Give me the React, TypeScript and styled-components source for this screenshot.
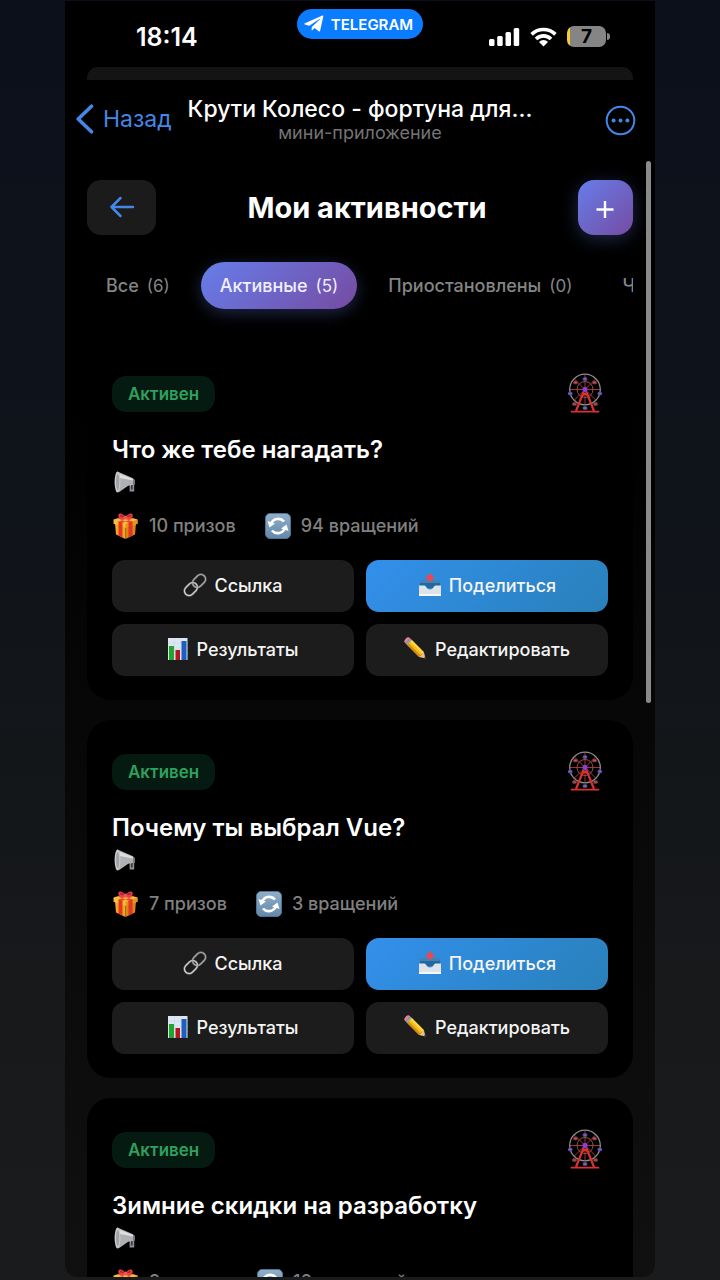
import React from "react";
import styled, { createGlobalStyle, css } from "styled-components";

const GlobalStyle = createGlobalStyle`
  * { box-sizing: border-box; }
  html, body, #root { height: 100%; }
  body {
    margin: 0;
    background: #121418;
    color: #fff;
    font-family: Inter, "Liberation Sans", sans-serif;
  }
  button { font: inherit; color: inherit; border: 0; padding: 0; background: none; cursor: pointer; }
  h1, h2, p { margin: 0; }
  svg { display: block; flex: none; }
`;

const Stage = styled.div`
  height: 100vh;
  padding: 1px 0 3px;
  overflow: hidden;
  background: linear-gradient(180deg, #0b101b 0%, #0e131b 30%, #131619 60%, #191a1c 85%, #1a1b1c 100%);
`;

const Phone = styled.div`
  position: relative;
  display: flex;
  flex-direction: column;
  width: 100%;
  max-width: 590px;
  height: 100%;
  margin: 0 auto;
  overflow: hidden;
  border-radius: 0 0 12px 12px;
  background: linear-gradient(180deg, #000 0%, #000 32%, #070707 56%, #101010 100%);
`;

const StatusBar = styled.header`
  flex: none;
  display: grid;
  grid-template-columns: 1fr auto 1fr;
  height: 66px;
  padding: 8px 0 0;
`;

const Clock = styled.time`
  padding: 13px 0 0 71px;
  font-size: 25px;
  line-height: 30px;
  font-weight: 600;
`;

const AppPill = styled.button`
  display: flex;
  align-items: center;
  gap: 7px;
  height: 30px;
  padding: 0 10px 0 7px;
  border-radius: 15px;
  background: #0a7cff;
  font-size: 15px;
  font-weight: 600;
`;

const Indicators = styled.div`
  display: flex;
  align-items: center;
  justify-content: flex-end;
  gap: 10px;
  height: 55px;
  padding-right: 49px;
`;

const Battery = styled.div`
  position: relative;
  width: 39px;
  height: 21px;
  border-radius: 7px;
  background: linear-gradient(90deg, #f5cf2e 3px, #858585 3px);
  color: #000;
  font-size: 19px;
  line-height: 21px;
  font-weight: 700;
  text-align: center;
  &::after {
    content: "";
    position: absolute;
    top: 7px;
    right: -4px;
    width: 3px;
    height: 7px;
    border-radius: 0 3px 3px 0;
    background: #858585;
  }
`;

const SheetPeek = styled.div`
  flex: none;
  height: 13px;
  margin: 0 22px;
  border-radius: 11px 11px 0 0;
  background: #141414;
`;

const NavBar = styled.nav`
  flex: none;
  display: grid;
  grid-template-columns: 1fr auto 1fr;
  align-items: center;
  height: 80px;
  padding: 0 11px;
`;

const NavBack = styled.button`
  display: flex;
  align-items: center;
  justify-self: start;
  gap: 9px;
  padding-bottom: 2px;
  color: #4487e8;
  font-size: 23px;
`;

const NavTitle = styled.div`
  padding-bottom: 2px;
  text-align: center;
  strong { display: block; font-size: 23px; line-height: 28px; font-weight: 500; white-space: nowrap; }
  span { display: block; color: #747474; font-size: 18px; line-height: 20px; }
`;

const MoreButton = styled.button`
  justify-self: end;
  margin-right: 8px;
`;

const Content = styled.main`
  flex: 1;
  min-height: 0;
  overflow: hidden;
  padding: 20px 22px;
`;

const Toolbar = styled.div`
  display: flex;
  align-items: center;
  justify-content: space-between;
  h1 { font-size: 29px; line-height: 36px; font-weight: 700; }
`;

const ToolButton = styled.button<{ $accent?: boolean }>`
  display: grid;
  place-items: center;
  width: 69px;
  height: 55px;
  border-radius: 14px;
  background: #1b1b1b;
  color: #4487e8;
  ${(p) =>
    p.$accent &&
    css`
      width: 55px;
      border-radius: 16px;
      background: linear-gradient(135deg, #667eea, #764ba2);
      color: #fff;
      box-shadow: 0 4px 18px rgba(102, 126, 234, 0.3);
    `}
`;

const Tabs = styled.div`
  display: flex;
  gap: 12px;
  margin: 7px 0 13px;
  padding: 20px 0;
  overflow: hidden;
`;

const Tab = styled.button<{ $active?: boolean }>`
  flex: none;
  display: flex;
  align-items: center;
  gap: 8px;
  height: 47px;
  padding: 0 19px;
  border-radius: 24px;
  color: ${(p) => (p.$active ? "#f0efff" : "#858585")};
  font-size: 18px;
  font-weight: 500;
  white-space: nowrap;
  ${(p) =>
    p.$active &&
    css`
      background: linear-gradient(135deg, #667eea, #764ba2);
      box-shadow: 0 4px 16px rgba(102, 126, 234, 0.3);
    `}
  span { font-size: 17px; font-weight: 400; }
`;

const CardList = styled.div`
  display: flex;
  flex-direction: column;
  gap: 20px;
`;

const Card = styled.article`
  padding: 25px 25px 24px;
  border-radius: 24px;
  background: #000;
  h2 { margin: 13px 0 4px; font-size: 24px; line-height: 32px; font-weight: 600; }
`;

const CardTop = styled.div`
  display: flex;
  align-items: center;
  justify-content: space-between;
`;

const Badge = styled.span`
  padding: 0 16px;
  border-radius: 14px;
  background: #051a10;
  color: #2fa05f;
  font-size: 17px;
  line-height: 36px;
  font-weight: 600;
`;

const Stats = styled.div`
  display: flex;
  gap: 29px;
  margin: 19px 0 21px;
`;

const Stat = styled.span`
  display: flex;
  align-items: center;
  gap: 10px;
  height: 26px;
  color: #808080;
  font-size: 18px;
  line-height: 24px;
  font-weight: 500;
`;

const Actions = styled.div`
  display: grid;
  grid-template-columns: 1fr 1fr;
  gap: 12px;
`;

const Action = styled.button<{ $primary?: boolean }>`
  display: flex;
  align-items: center;
  justify-content: center;
  gap: 7px;
  height: 52px;
  padding-bottom: 2px;
  border-radius: 13px;
  background: ${(p) => (p.$primary ? "linear-gradient(135deg, #3390ec, #2980b9)" : "#1c1c1c")};
  color: #f4f4f4;
  font-size: 18px;
  font-weight: 500;
`;

const ScrollThumb = styled.div`
  position: absolute;
  top: 160px;
  right: 4px;
  bottom: 45%;
  width: 5px;
  border-radius: 3px;
  background: #8a8a8a;
`;

const PlaneIcon = () => (
  <svg width="20" height="18" viewBox="0 0 20 18" fill="#fff" aria-hidden="true">
    <path d="M19.3 1.4c.2-.7-.3-1-.9-.8L.9 8.2c-.8.3-.7 1 0 1.2l4.4 1.3L15.5 4c.5-.3.8 0 .5.3l-8.2 7.6-.2 3.7c.4 0 .7-.2 1-.5l2-2 4.1 3.2c.8.4 1.3.2 1.5-.8z" />
  </svg>
);

const SignalIcon = () => (
  <svg width="31" height="20" viewBox="0 0 31 20" fill="#fff" aria-hidden="true">
    <rect x="0" y="12" width="5.500" height="7" rx="1.500" />
    <rect x="8.200" y="9" width="5.500" height="10" rx="1.500" />
    <rect x="16.500" y="5" width="5.500" height="14" rx="1.500" />
    <rect x="24.700" y="1" width="5.500" height="18" rx="1.500" />
  </svg>
);

const WifiIcon = () => (
  <svg width="27" height="20" viewBox="0 0 27 20" aria-hidden="true">
    <g fill="none" stroke="#fff" strokeWidth="3.6">
      <path d="M1.6 7.4a17 17 0 0 1 23.8 0" />
      <path d="M6 12a10.6 10.6 0 0 1 15 0" />
    </g>
    <path d="M9 14.9a6.4 6.4 0 0 1 9 0l-4.5 4.5z" fill="#fff" />
  </svg>
);

const ChevronIcon = () => (
  <svg width="18" height="30" viewBox="0 0 18 30" fill="none" stroke="currentColor" strokeWidth="3.600" strokeLinecap="round" strokeLinejoin="round" aria-hidden="true">
    <path d="M15.5 2.200 2.200 15l13.300 12.800" />
  </svg>
);

const MoreIcon = () => (
  <svg width="31" height="31" viewBox="0 0 31 31" aria-hidden="true">
    <circle cx="15.5" cy="15.5" r="13.8" fill="none" stroke="#4487e8" strokeWidth="2" />
    <g fill="#4487e8">
      <circle cx="8.6" cy="15.5" r="2" />
      <circle cx="15.5" cy="15.5" r="2" />
      <circle cx="22.4" cy="15.5" r="2" />
    </g>
  </svg>
);

const ArrowIcon = () => (
  <svg width="26" height="24" viewBox="0 0 26 24" fill="none" stroke="currentColor" strokeWidth="2.500" strokeLinecap="round" strokeLinejoin="round" aria-hidden="true">
    <path d="M24 11H2.500M11.500 2 2.500 11l9 9" />
  </svg>
);

const PlusIcon = () => (
  <svg width="18" height="22" viewBox="0 0 18 22" stroke="currentColor" strokeWidth="2.400" aria-hidden="true">
    <path d="M.5 12.500h17M9 4v17" />
  </svg>
);

const cabins = [
  [20, 5, "#6a45ac"],
  [29.5, 8.5, "#93343f"],
  [34.8, 19.5, "#5c4aa6"],
  [30.5, 30, "#863d39"],
  [20, 34, "#5e5896"],
  [9.5, 30, "#863d39"],
  [5.2, 19.5, "#5c4aa6"],
  [10.5, 8.5, "#93343f"],
] as const;

const WheelIcon = () => (
  <svg width="46" height="54" viewBox="-3 -7 46 54" aria-hidden="true">
    <g stroke="#a5302d" strokeWidth="1">
      <path d="M20 1v29M5 15.500h30M9.400 5l21.200 21M30.600 5 9.400 26" />
    </g>
    <circle cx="20" cy="15.500" r="8" fill="none" stroke="#8b5948" strokeWidth="1" />
    <circle cx="20" cy="15.500" r="15.300" fill="none" stroke="#8f8c8c" strokeWidth="1.300" />
    {cabins.map(([x, y, color]) => (
      <g key={`${x}-${y}`}>
        <rect x={x - 2.3} y={y - 1.7} width="4.600" height="3.400" rx="1.500" fill={color} />
        <rect x={x - 1.2} y={y - 0.5} width="2.400" height="1" fill="#c9b5d8" opacity=".35" />
      </g>
    ))}
    <path d="M18.600 18 11 37M21.400 18 29 37" stroke="#d93234" strokeWidth="2.200" />
    <path d="M16.500 24q3.500-6 7 0l-.8-5h-5.400z" fill="#d93234" />
    <path d="M6.500 37.700h27" stroke="#d93234" strokeWidth="1.800" strokeLinecap="round" />
    <rect x="17.500" y="13" width="5" height="5" rx="2" fill="#8a3fe0" />
  </svg>
);

const MegaphoneIcon = () => (
  <svg width="26" height="24" viewBox="0 0 26 24" aria-hidden="true">
    <path d="M18.500 10.500v10h2.800v-8.300" fill="none" stroke="#8d9095" strokeWidth="1.800" />
    <path d="M5.500 1.500 21 8.300q1.400.8 1.200 3v3.500l-6 1-9.700 6.700z" fill="#aeb0b3" />
    <path d="M7 3.500 21 9v1.500L8 8z" fill="#dedede" />
    <ellipse cx="5.500" cy="12" rx="2.900" ry="10.600" fill="#c9cacc" />
    <ellipse cx="5.700" cy="12" rx="1.600" ry="8" fill="#a0a2a5" />
    <path d="m21 9 2 .8v4.700l-2 .4z" fill="#77797d" />
  </svg>
);

const GiftIcon = () => (
  <svg width="27" height="26" viewBox="0 0 27 26" aria-hidden="true">
    <path d="M3 10.500 13.500 14v12L4 21.500z" fill="#f2a624" />
    <path d="M24 10.500 13.500 14v12l9.500-4.500z" fill="#db8418" />
    <path d="M1.500 6.500 13.500 3l12 3.500v4.300l-12 4-12-4z" fill="#f8bd3a" />
    <path d="m13.500 11 12-4.500v4.300l-12 4z" fill="#e59420" />
    <path d="m6.500 8.300 4 1.300v15l-4-2zM20.500 8.300l-4 1.300v15l4-2z" fill="#e23522" />
    <path d="m6 5.500 3.500-1 11 4-4 1.300zM21 5.500l-3.500-1-11 4 4 1.300z" fill="#e84a39" />
    <path d="M13.500 5.500C10 5.800 7 5.500 6.500 4c-.5-2 0-4 2-3.500 2 .3 4 2 5 3.700 1-1.700 3-3.400 5-3.700 2-.5 2.500 1.500 2 3.500-.5 1.500-3.500 1.800-7 1.500z" fill="#e73b43" />
    <path d="M8 3c1-.8 3 .2 4 1.300M19 3c-1-.8-3 .2-4 1.300" fill="none" stroke="#8f1821" strokeWidth="1" />
    <circle cx="13.500" cy="4.500" r="2" fill="#f0545a" />
  </svg>
);

const SpinIcon = () => (
  <svg width="26" height="26" viewBox="0 0 26 26" aria-hidden="true">
    <defs>
      <linearGradient id="spin" x1="0" y1="0" x2="0" y2="1">
        <stop offset="0" stopColor="#91afc9" />
        <stop offset="1" stopColor="#6288aa" />
      </linearGradient>
    </defs>
    <rect x=".5" y=".5" width="25" height="25" rx="4.500" fill="url(#spin)" stroke="#517492" />
    <g fill="none" stroke="#fff" strokeWidth="2.700">
      <path d="M6 11.500a7.500 7.500 0 0 1 13-3" />
      <path d="M20 14.500a7.500 7.500 0 0 1-13 3" />
    </g>
    <path d="M2.500 8l2 6.500 5.500-4zM23.500 18l-2-6.500-5.500 4z" fill="#fff" />
  </svg>
);

const LinkIcon = () => (
  <svg width="24" height="24" viewBox="0 0 24 24" fill="none" aria-hidden="true">
    <g transform="rotate(-45 12 12)">
      <rect x="-1" y="7.300" width="14.500" height="9.400" rx="4.700" stroke="#77797c" strokeWidth="2.200" />
      <rect x="10.500" y="7.300" width="14.500" height="9.400" rx="4.700" stroke="#6d6f72" strokeWidth="2.200" />
      <rect x="-1" y="7.300" width="14.500" height="9.400" rx="4.700" stroke="#d4d4d4" strokeWidth="1.100" />
      <rect x="10.500" y="7.300" width="14.500" height="9.400" rx="4.700" stroke="#a9aaac" strokeWidth="1" />
    </g>
  </svg>
);

const ShareIcon = () => (
  <svg width="24" height="24" viewBox="0 0 24 24" aria-hidden="true">
    <path d="M3 7h18l2 8H1z" fill="#24679f" />
    <path d="M3 7h18l.7 3H2.300z" fill="#3f83b9" />
    <path d="M12 1 8.300 5h2v2.500h3.400V5h2z" fill="#e34b55" stroke="#e34b55" strokeWidth="1.400" strokeLinejoin="round" />
    <path d="M1 12.500h5.500c1.800 0 2 4 5.500 4s3.700-4 5.500-4H23V23H1z" fill="#dde3e8" />
    <path d="M1 21h22v2H1z" fill="#f6f7f8" />
  </svg>
);

const ChartIcon = () => (
  <svg width="22" height="24" viewBox="0 0 22 24" aria-hidden="true">
    <rect x="1" y="1" width="19.500" height="22" fill="#dce7f2" />
    <path d="M1 6h19.500M1 11h19.500M1 16h19.500M7.500 1v22M14 1v22" stroke="#cbd9e7" strokeWidth=".6" />
    <rect x="2" y="9" width="5" height="14" fill="#1fa62c" />
    <rect x="8.500" y="13" width="4.500" height="10" fill="#b3161c" />
    <rect x="14.500" y="4" width="5" height="19" fill="#1d5ec0" />
  </svg>
);

const PencilIcon = () => (
  <svg width="24" height="24" viewBox="-1 -1 26 26" aria-hidden="true">
    <g transform="rotate(45 12 12)">
      <path d="M20.500 8.300 26.500 12l-6 3.700z" fill="#e8c08e" />
      <path d="m24.900 11 1.600 1-1.600 1z" fill="#343434" />
      <rect x="1.500" y="8.300" width="19" height="7.400" fill="#f6bd1b" />
      <rect x="1.500" y="8.300" width="19" height="2.400" fill="#ffd84a" />
      <rect x="1.500" y="13.300" width="19" height="2.400" fill="#d88b10" />
      <rect x="-.5" y="8.300" width="2.600" height="7.400" fill="#8da5ae" />
      <path d="M-.5 8.300h-1q-2.300 0-2.300 3.700t2.300 3.700h1z" fill="#e58795" />
    </g>
  </svg>
);

const tabs = [
  { label: "Все", count: 6 },
  { label: "Активные", count: 5, active: true },
  { label: "Приостановлены", count: 0 },
  { label: "Черновики", count: 1 },
];

const activities = [
  { title: "Что же тебе нагадать?", prizes: "10 призов", spins: "94 вращений" },
  { title: "Почему ты выбрал Vue?", prizes: "7 призов", spins: "3 вращений" },
  { title: "Зимние скидки на разработку", prizes: "9 призов", spins: "10 вращений" },
];

export default function App() {
  return (
    <Stage>
      <GlobalStyle />
      <Phone>
        <StatusBar>
          <Clock>18:14</Clock>
          <AppPill>
            <PlaneIcon />
            TELEGRAM
          </AppPill>
          <Indicators>
            <SignalIcon />
            <WifiIcon />
            <Battery>7</Battery>
          </Indicators>
        </StatusBar>
        <SheetPeek />
        <NavBar>
          <NavBack>
            <ChevronIcon />
            Назад
          </NavBack>
          <NavTitle>
            <strong>Крути Колесо - фортуна для...</strong>
            <span>мини-приложение</span>
          </NavTitle>
          <MoreButton aria-label="Ещё">
            <MoreIcon />
          </MoreButton>
        </NavBar>
        <Content>
          <Toolbar>
            <ToolButton aria-label="Назад">
              <ArrowIcon />
            </ToolButton>
            <h1>Мои активности</h1>
            <ToolButton $accent aria-label="Создать">
              <PlusIcon />
            </ToolButton>
          </Toolbar>
          <Tabs>
            {tabs.map((tab) => (
              <Tab key={tab.label} $active={tab.active}>
                {tab.label}
                <span>({tab.count})</span>
              </Tab>
            ))}
          </Tabs>
          <CardList>
            {activities.map((item) => (
              <Card key={item.title}>
                <CardTop>
                  <Badge>Активен</Badge>
                  <WheelIcon />
                </CardTop>
                <h2>{item.title}</h2>
                <MegaphoneIcon />
                <Stats>
                  <Stat>
                    <GiftIcon />
                    {item.prizes}
                  </Stat>
                  <Stat>
                    <SpinIcon />
                    {item.spins}
                  </Stat>
                </Stats>
                <Actions>
                  <Action>
                    <LinkIcon />
                    Ссылка
                  </Action>
                  <Action $primary>
                    <ShareIcon />
                    Поделиться
                  </Action>
                  <Action>
                    <ChartIcon />
                    Результаты
                  </Action>
                  <Action>
                    <PencilIcon />
                    Редактировать
                  </Action>
                </Actions>
              </Card>
            ))}
          </CardList>
        </Content>
        <ScrollThumb />
      </Phone>
    </Stage>
  );
}
